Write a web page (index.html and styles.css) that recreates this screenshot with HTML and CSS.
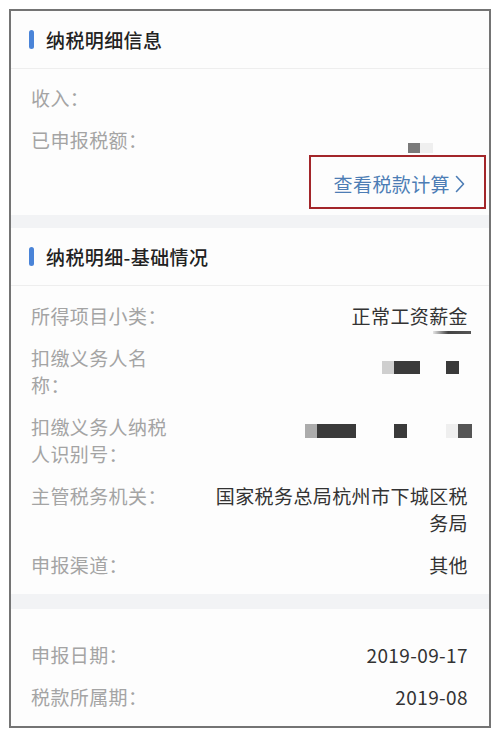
FILE: index.html
```html
<!DOCTYPE html>
<html lang="zh-CN">
<head>
<meta charset="utf-8">
<title>纳税明细</title>
<link rel="stylesheet" href="styles.css">
</head>
<body>
<div class="frame">
  <section class="card">
    <div class="card-head"><span class="bar"></span>纳税明细信息</div>
    <div class="rows rows-first">
      <div class="row"><div class="label">收入：</div><div class="value"></div></div>
      <div class="row"><div class="label">已申报税额：</div>
        <div class="value"><div class="redact r-tax"><span class="b b-mid w12"></span><span class="b b-faint w13"></span></div></div>
      </div>
    </div>
    <div class="link-row">
      <a class="calc-link" href="#">查看税款计算<svg class="chev" width="12" height="18" viewBox="0 0 12 18"><path d="M2.5 1.5 L9.5 9 L2.5 16.5" fill="none" stroke="#4d7db5" stroke-width="1.6" stroke-linejoin="round" stroke-linecap="round"/></svg></a>
    </div>
  </section>
  <div class="band band-a"></div>
  <section class="card">
    <div class="card-head"><span class="bar"></span>纳税明细-基础情况</div>
    <div class="rows rows-basic">
      <div class="row"><div class="label">所得项目小类：</div>
        <div class="value"><div>正常工资薪金</div><div class="smear"></div></div>
      </div>
      <div class="row"><div class="label">扣缴义务人名称：</div>
        <div class="value"><div class="redact r-name"><span class="b b-light w12"></span><span class="b b-dark w26"></span><span class="b b-dark w13 gap26"></span></div></div>
      </div>
      <div class="row"><div class="label">扣缴义务人纳税人识别号：</div>
        <div class="value"><div class="redact r-id"><span class="b b-grey w12"></span><span class="b b-dark w39"></span><span class="b b-dark w13 gap38"></span><span class="b b-faint w12 gap39"></span><span class="b b-dim w14"></span></div></div>
      </div>
      <div class="row"><div class="label">主管税务机关：</div><div class="value dark">国家税务总局杭州市下城区税务局</div></div>
      <div class="row"><div class="label">申报渠道：</div><div class="value dark">其他</div></div>
    </div>
  </section>
  <div class="band band-b"></div>
  <section class="card">
    <div class="rows rows-date">
      <div class="row"><div class="label">申报日期：</div><div class="value dark">2019-09-17</div></div>
      <div class="row"><div class="label">税款所属期：</div><div class="value dark">2019-08</div></div>
    </div>
  </section>
</div>
</body>
</html>
```

FILE: styles.css
```css
* { box-sizing: border-box; }
html, body { margin: 0; padding: 0; background: #ffffff; }
body {
  font-family: "Noto Sans CJK SC", "Noto Sans", sans-serif;
  font-size: 19px;
  letter-spacing: 0.4px;
}
.frame {
  margin: 9px;
  width: 482px;
  border: 2px solid #747474;
  background: #fdfdfd;
}
.card { background: #fdfdfd; }
.card-head {
  height: 58px;
  display: flex;
  align-items: center;
  padding-left: 18px;
  border-bottom: 1px solid #eeeeee;
  color: #222222;
  font-weight: 500;
}
.bar {
  width: 5px;
  height: 19px;
  border-radius: 3px;
  background: #4a84d8;
  margin-right: 12px;
}
.rows {
  display: flex;
  flex-direction: column;
  gap: 15px;
  padding: 16px 21px 16px 20px;
}
.rows-first { padding-top: 15px; padding-bottom: 0; }
.rows-date { padding-top: 32px; }
.row {
  display: flex;
  column-gap: 35px;
  line-height: 27px;
}
.label {
  width: 140px;
  flex: none;
  color: #a4a4a4;
}
.value {
  flex: 1;
  text-align: right;
  color: #333333;
}
.dark { color: #333333; }
.link-row {
  display: flex;
  justify-content: flex-end;
  padding: 2px 3px 6px 0;
}
.calc-link {
  display: flex;
  align-items: center;
  border: 2px solid #a3262a;
  padding: 13px 18px 10px 23px;
  line-height: 27px;
  color: #4d7db5;
  text-decoration: none;
}
.chev { margin-left: 4px; }
.band { background: #f2f3f5; }
.band-a { height: 13px; }
.band-b { height: 15px; }
.redact { display: flex; justify-content: flex-end; }
.r-tax { padding-top: 17px; margin-right: 35px; }
.r-name { padding-top: 17px; margin-right: 9px; }
.r-id { padding-top: 11px; margin-right: -4px; }
.b { display: block; height: 13px; }
.r-tax .b { height: 10px; }
.r-id .b { height: 14px; }
.b-mid { background: #7a7a7a; }
.b-faint { background: #efefef; }
.b-light { background: #cfcfcf; }
.b-grey { background: #acacac; }
.b-dark { background: #3a3a3a; }
.b-dim { background: #555555; }
.w12 { width: 12px; }
.w13 { width: 13px; }
.w14 { width: 14px; }
.w26 { width: 26px; }
.w39 { width: 39px; }
.gap26 { margin-left: 26px; }
.gap38 { margin-left: 38px; }
.gap39 { margin-left: 39px; }
.smear {
  width: 38px;
  height: 3px;
  margin: 2px -3px -5px auto;
  background: linear-gradient(to right, #e6e6e6, #444444 40%, #555555);
}
```
